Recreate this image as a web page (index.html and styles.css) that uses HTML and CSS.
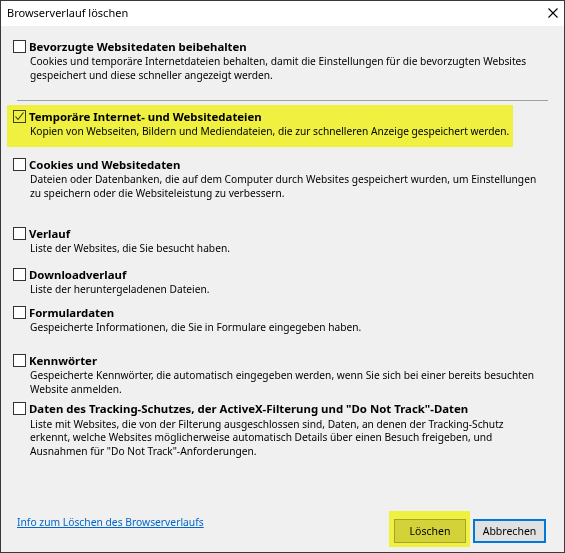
FILE: index.html
```html
<!DOCTYPE html>
<html lang="de">
<head>
    <meta charset="UTF-8">
    <title>Browserverlauf löschen</title>
    <link rel="stylesheet" href="styles.css">
</head>
<body>
    <div class="dialog">
        <div class="titlebar">
            <span class="title">Browserverlauf löschen</span>
            <button class="close" aria-label="Schließen">
                <svg width="10" height="10" viewBox="0 0 10 10">
                    <path d="M0.5 0.5 L9.5 9.5 M9.5 0.5 L0.5 9.5" stroke="#000" stroke-width="1.1" fill="none"/>
                </svg>
            </button>
        </div>

        <div class="content">
            <div class="option">
                <div class="option-head"><span class="box"></span>Bevorzugte Websitedaten beibehalten</div>
                <p class="option-desc">Cookies und temporäre Internetdateien behalten, damit die Einstellungen für die bevorzugten Websites<br>gespeichert und diese schneller angezeigt werden.</p>
            </div>

            <hr class="separator">

            <div class="option mark option-temp">
                <div class="option-head"><span class="box checked">
                    <svg width="11" height="11" viewBox="0 0 11 11">
                        <path d="M1.5 5.5 L4 8.5 L9.5 1.5" stroke="#3a3a3a" stroke-width="1.1" fill="none"/>
                    </svg>
                </span>Temporäre Internet- und Websitedateien</div>
                <p class="option-desc">Kopien von Webseiten, Bildern und Mediendateien, die zur schnelleren Anzeige gespeichert werden.</p>
            </div>

            <div class="option option-cookies">
                <div class="option-head"><span class="box"></span>Cookies und Websitedaten</div>
                <p class="option-desc">Dateien oder Datenbanken, die auf dem Computer durch Websites gespeichert wurden, um Einstellungen<br>zu speichern oder die Websiteleistung zu verbessern.</p>
            </div>

            <div class="option option-history">
                <div class="option-head"><span class="box"></span>Verlauf</div>
                <p class="option-desc">Liste der Websites, die Sie besucht haben.</p>
            </div>

            <div class="option option-downloads">
                <div class="option-head"><span class="box"></span>Downloadverlauf</div>
                <p class="option-desc">Liste der heruntergeladenen Dateien.</p>
            </div>

            <div class="option option-forms">
                <div class="option-head"><span class="box"></span>Formulardaten</div>
                <p class="option-desc">Gespeicherte Informationen, die Sie in Formulare eingegeben haben.</p>
            </div>

            <div class="option option-passwords">
                <div class="option-head"><span class="box"></span>Kennwörter</div>
                <p class="option-desc">Gespeicherte Kennwörter, die automatisch eingegeben werden, wenn Sie sich bei einer bereits besuchten<br>Website anmelden.</p>
            </div>

            <div class="option option-tracking">
                <div class="option-head"><span class="box"></span>Daten des Tracking-Schutzes, der ActiveX-Filterung und "Do Not Track"-Daten</div>
                <p class="option-desc">Liste mit Websites, die von der Filterung ausgeschlossen sind, Daten, an denen der Tracking-Schutz<br>erkennt, welche Websites möglicherweise automatisch Details über einen Besuch freigeben, und<br>Ausnahmen für "Do Not Track"-Anforderungen.</p>
            </div>
        </div>

        <div class="footer">
            <a class="info-link" href="#">Info zum Löschen des Browserverlaufs</a>
            <div class="buttons">
                <span class="mark mark-button"><button class="btn">Löschen</button></span>
                <button class="btn btn-default">Abbrechen</button>
            </div>
        </div>
    </div>
</body>
</html>
```

FILE: styles.css
```css
body {
    margin: 0;
    background: #f0f0f0;
    font-family: "Noto Sans", "Open Sans", sans-serif;
    color: #000;
}

.dialog {
    width: 565px;
    height: 553px;
    box-sizing: border-box;
    border: 1px solid #3a3a3a;
    background: #f0f0f0;
    display: flex;
    flex-direction: column;
}

/* --- Title bar --- */
.titlebar {
    height: 25px;
    background: #fff;
    display: flex;
    align-items: center;
    justify-content: space-between;
    padding: 0 6px 0 6px;
}

.title {
    font-size: 11px;
    line-height: 14px;
    margin-top: -1px;
}

.close {
    border: none;
    background: none;
    padding: 0;
    width: 10px;
    height: 10px;
    display: flex;
    margin-top: -2px;
}

/* --- Options list --- */
.content {
    flex: 1;
    padding: 12px 0 0 12px;
}

.option-head {
    display: flex;
    align-items: center;
    height: 16px;
    font-size: 11.4px;
    font-weight: bold;
    white-space: nowrap;
}

.box {
    width: 13px;
    height: 13px;
    box-sizing: border-box;
    border: 1px solid #333;
    background: #fff;
    margin-right: 3px;
    display: flex;
    align-items: center;
    justify-content: center;
    flex-shrink: 0;
}

.box.checked {
    background: transparent;
    border-color: #444;
}

.option-desc {
    margin: 1px 0 0 17px;
    font-size: 10.2px;
    line-height: 13.5px;
    white-space: nowrap;
}

.separator {
    border: none;
    border-top: 1px solid #a0a0a0;
    margin: 18px 16px 0 4px;
    height: 0;
}

/* highlighter marking */
.mark {
    background: #f0f040;
}

.mark > * {
    mix-blend-mode: multiply;
}

.option-temp {
    width: fit-content;
    margin: 4px 0 0 -6px;
    padding: 3px 4px 8px 6px;
}

.option-cookies   { margin-top: 9.5px; }
.option-history   { margin-top: 25px; }
.option-downloads { margin-top: 10.5px; }
.option-forms     { margin-top: 7.5px; }
.option-passwords { margin-top: 17.5px; }
.option-tracking  { margin-top: 4.5px; }

/* --- Footer --- */
.footer {
    display: flex;
    justify-content: space-between;
    align-items: flex-start;
    padding: 0 18px 5px 16px;
}

.info-link {
    margin-top: 4px;
    font-size: 10.3px;
    line-height: 14px;
    color: #0066cc;
    text-decoration: underline;
}

.buttons {
    display: flex;
    align-items: flex-end;
    gap: 3px;
}

.mark-button {
    display: flex;
    padding: 8px 4px 4px 5px;
}

.btn {
    width: 72px;
    height: 24px;
    box-sizing: border-box;
    border: 1px solid #adadad;
    background: #e1e1e1;
    font-family: "Noto Sans", "Open Sans", sans-serif;
    font-size: 10.5px;
    color: #000;
    padding: 0;
}

.btn-default {
    width: 73px;
    border: 2px solid #0078d7;
    margin-bottom: 4px;
}
```
